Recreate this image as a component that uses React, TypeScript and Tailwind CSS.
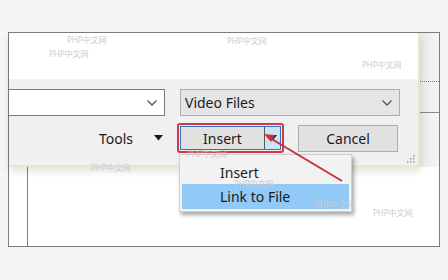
const Watermark = ({ className }: { className: string }) => (
  <span className={`pointer-events-none absolute text-[8px] leading-none text-[#c9ccd1] ${className}`}>PHP中文网</span>
);

const Chevron = () => (
  <svg width="12" height="8" viewBox="0 0 12 8" className="shrink-0">
    <path d="M1.5 1.5 L6 6 L10.5 1.5" fill="none" stroke="#555" strokeWidth="1.3" />
  </svg>
);

const Caret = () => (
  <svg width="9" height="6" viewBox="0 0 9 6">
    <path d="M0 0 H9 L4.5 5.5 Z" fill="#1a1a1a" />
  </svg>
);

export default function App() {
  return (
    <div
      className="h-[280px] w-[448px] overflow-hidden bg-[#f4f5f7] pl-[8px] pt-[32px] text-[#1a1a1a]"
      style={{ fontFamily: '"Noto Sans", "Open Sans", "Noto Sans CJK SC", sans-serif' }}
    >
      <div className="relative flex h-[215px] w-[432px] flex-col border border-[#7d7d7d] bg-white">
        {/* top: dialog + right strip */}
        <div className="flex h-[134px]">
          <div className="z-10 flex w-[411px] flex-col border-b-2 border-r-2 border-[#efe4c8] bg-[#f0f0f0] shadow-[0_4px_8px_rgba(0,0,0,0.12)]">
            <div className="h-[46px] bg-white" />
            <div className="flex pt-[10px]">
              <div className="flex h-[27px] w-[156px] items-center justify-end border border-l-0 border-[#7a7a7a] bg-white pr-[6px]">
                <Chevron />
              </div>
              <div className="ml-[15px] flex h-[27px] w-[220px] items-center justify-between border border-[#adadad] bg-[#e5e5e5] pl-[4px] pr-[6px] text-[14px]">
                <span>Video Files</span>
                <Chevron />
              </div>
            </div>
            <div className="mt-[7px] flex items-center">
              <div className="flex w-[168px] items-center justify-end pr-[14px] text-[14px]">
                <span className="mr-[21px]">Tools</span>
                <Caret />
              </div>
              <div className="flex h-[30px] w-[107px] items-center justify-center rounded-[3px] border-2 border-[#d0393f] p-px">
                <div className="flex h-full w-full border border-[#2f72c8]">
                  <div className="flex flex-1 items-center justify-center bg-[#e1e1e1] text-[14px]">Insert</div>
                  <div className="flex w-[16px] items-center justify-center border-l border-[#555] bg-[#cce4f7]">
                    <Caret />
                  </div>
                </div>
              </div>
              <div className="ml-[14px] flex h-[27px] w-[100px] items-center justify-center border border-[#adadad] bg-[#e1e1e1] text-[14px]">
                Cancel
              </div>
            </div>
            <div className="mt-auto flex justify-end pb-[2px] pr-[3px]">
              <svg width="8" height="8" viewBox="0 0 8 8">
                <g fill="#9a9a9a">
                  <rect x="6" y="0" width="1.5" height="1.5" />
                  <rect x="3" y="3" width="1.5" height="1.5" />
                  <rect x="6" y="3" width="1.5" height="1.5" />
                  <rect x="0" y="6" width="1.5" height="1.5" />
                  <rect x="3" y="6" width="1.5" height="1.5" />
                  <rect x="6" y="6" width="1.5" height="1.5" />
                </g>
              </svg>
            </div>
          </div>
          <div className="flex flex-1 flex-col bg-gradient-to-r from-[#e9e9e9] to-[#f6f6f6]">
            <div className="mt-[48px] border-t border-dotted border-[#777]" />
            <div className="mt-[30px] border-t border-[#888]" />
          </div>
        </div>
        {/* bottom: list area */}
        <div className="flex flex-1">
          <div className="w-[19px] border-r border-[#7d7d7d] bg-white" />
          <div className="flex-1 bg-white" />
        </div>

        {/* dropdown menu */}
        <div className="absolute left-[170px] top-[121px] z-20 flex h-[58px] w-[173px] flex-col border border-[#cfcfcf] bg-[#f2f2f2] p-[2px] text-[14px] shadow-[2px_3px_4px_rgba(0,0,0,0.35)]">
          <div className="flex h-[27px] items-center pl-[38px] pt-[3px]">Insert</div>
          <div className="flex h-[25px] items-center bg-[#91c9f7] pl-[38px]">Link to File</div>
        </div>

        {/* annotation arrow */}
        <svg className="pointer-events-none absolute left-0 top-0 z-30" width="432" height="215" viewBox="0 0 432 215">
          <line x1="333" y1="148" x2="261" y2="105" stroke="#c9303a" strokeWidth="2" />
          <path d="M255 101 L266 102 L262 109 Z" fill="#c9303a" />
        </svg>

        <Watermark className="left-[58px] top-[3px] z-40" />
        <Watermark className="left-[40px] top-[17px] z-40" />
        <Watermark className="left-[218px] top-[4px] z-40" />
        <Watermark className="left-[353px] top-[28px] z-40" />
        <Watermark className="left-[82px] top-[131px] z-40" />
        <Watermark className="left-[178px] top-[117px] z-40" />
        <Watermark className="left-[225px] top-[147px] z-40" />
        <Watermark className="left-[306px] top-[168px] z-40" />
        <Watermark className="left-[364px] top-[176px] z-40" />
      </div>
    </div>
  );
}
